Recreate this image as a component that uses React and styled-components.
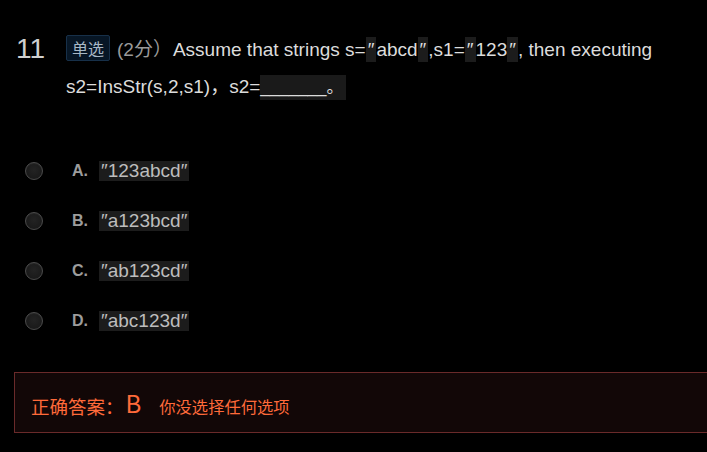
import React from "react";
import styled, { createGlobalStyle } from "styled-components";

const Global = createGlobalStyle`
  html, body { margin: 0; padding: 0; background: #000; overflow: hidden; }
  body { font-family: Arial, "Liberation Sans", "Noto Sans CJK SC", sans-serif; }
`;

const Page = styled.div`
  width: 707px;
  height: 452px;
  background: #000;
  padding-top: 30px;
  box-sizing: border-box;
  overflow: hidden;
`;

const QuestionRow = styled.div`
  display: flex;
  align-items: flex-start;
`;

const Num = styled.div`
  width: 50px;
  padding-left: 16px;
  font-size: 28px;
  line-height: 37px;
  color: #d0d0d0;
  font-family: Arial, "Liberation Sans", sans-serif;
  flex-shrink: 0;
`;

const Stem = styled.div`
  width: 630px;
  font-size: 19px;
  line-height: 35px;
  color: #dcdcdc;
`;

const Cjk = styled.span`
  font-family: "Noto Sans CJK SC", sans-serif;
`;

const Badge = styled.span`
  display: inline-block;
  font-family: "Noto Sans CJK SC", sans-serif;
  font-size: 16px;
  line-height: 24px;
  padding: 0 5px;
  border: 1px solid #173049;
  border-radius: 2px;
  background: #071625;
  color: #a8b8c6;
  margin-right: 7px;
  vertical-align: 1px;
`;

const Score = styled.span`
  color: #9a9a9a;
  margin-right: 1px;
`;

const Code = styled.span`
  background: #1c1c1c;
  padding: 2px 2px;
`;

const Blank = styled.span`
  background: #1a1a1a;
  padding: 3px 2px 3px 0;
  font-size: 17px;
`;

const Options = styled.div`
  margin-top: 54px;
  display: flex;
  flex-direction: column;
  gap: 26px;
`;

const Option = styled.div`
  display: flex;
  align-items: center;
  height: 24px;
  padding-left: 25px;
`;

const Radio = styled.span`
  width: 18px;
  height: 18px;
  box-sizing: border-box;
  border-radius: 50%;
  border: 1px solid #4c4c4c;
  background: radial-gradient(circle at 50% 45%, #232323 0%, #1a1a1a 70%, #141414 100%);
  box-shadow: inset 0 1px 1px rgba(255,255,255,0.06);
  margin-right: 29px;
  flex-shrink: 0;
`;

const Letter = styled.span`
  font-weight: bold;
  font-size: 16px;
  color: #9c9c9c;
  width: 27px;
`;

const OptText = styled.span`
  background: #1c1c1c;
  color: #bdbdbd;
  font-size: 19px;
  line-height: 20px;
  padding: 0 2px;
`;

const Answer = styled.div`
  margin-top: 39px;
  margin-left: 14px;
  width: 720px;
  height: 61px;
  box-sizing: border-box;
  border: 1px solid #6a2a2a;
  background: #120707;
  display: flex;
  align-items: center;
  padding-left: 16px;
  padding-top: 6px;
  color: #ff6a3a;
  font-family: "Noto Sans CJK SC", sans-serif;
`;

const AnsLabel = styled.span`
  font-size: 18.5px;
`;

const AnsLetter = styled.span`
  font-size: 24px;
  margin: 0 18px 0 2px;
  position: relative;
  top: -3px;
`;

const AnsNote = styled.span`
  font-size: 16.3px;
`;

const options = [
  ["A.", "123abcd"],
  ["B.", "a123bcd"],
  ["C.", "ab123cd"],
  ["D.", "abc123d"],
];

export default function App() {
  return (
    <Page>
      <Global />
      <QuestionRow>
        <Num>11</Num>
        <Stem>
          <Badge>单选</Badge>
          <Score>(2<Cjk>分）</Cjk></Score>
          Assume that strings s=<Code>″</Code>abcd<Code>″</Code>,s1=<Code>″</Code>123<Code>″</Code>, then executing s2=InsStr(s,2,s1)<Cjk>，</Cjk>s2=<Blank>_______<Cjk>。</Cjk></Blank>
        </Stem>
      </QuestionRow>
      <Options>
        {options.map(([l, t]) => (
          <Option key={l}>
            <Radio />
            <Letter>{l}</Letter>
            <OptText>″{t}″</OptText>
          </Option>
        ))}
      </Options>
      <Answer>
        <AnsLabel>正确答案：</AnsLabel>
        <AnsLetter>B</AnsLetter>
        <AnsNote>你没选择任何选项</AnsNote>
      </Answer>
    </Page>
  );
}
